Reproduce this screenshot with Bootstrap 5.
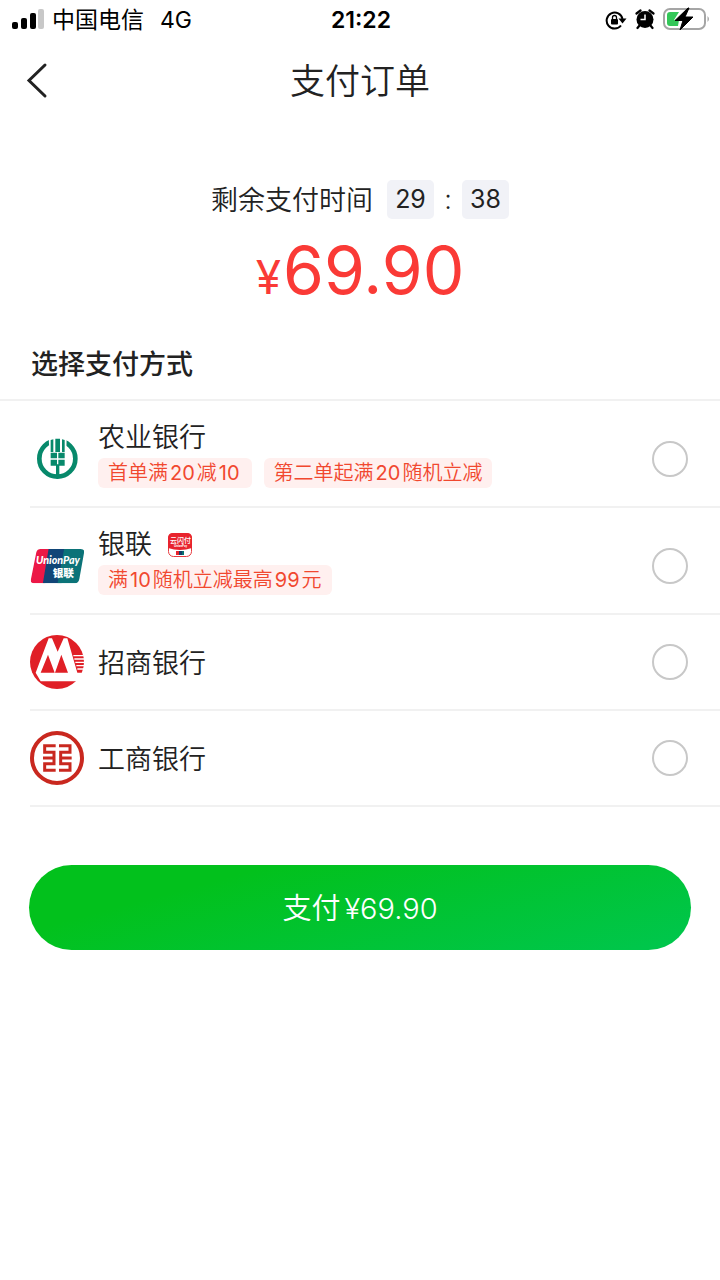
<!DOCTYPE html>
<html lang="zh-CN">
<head>
<meta charset="utf-8">
<meta name="viewport" content="width=device-width, initial-scale=1">
<title>支付订单</title>
<link href="https://cdn.jsdelivr.net/npm/bootstrap@5.3.0/dist/css/bootstrap.min.css" rel="stylesheet">
<style>
body { font-family: Inter, "Noto Sans CJK SC", sans-serif; font-size: 27px; line-height: 36px; color: #222; background: #fff; }
svg { display: block; flex: none; }
.status-bar { height: 40px; padding: 0 10px 0 12px; font-size: 23px; line-height: 40px; color: #000; }
.status-bar > div { flex: 1 1 0; }
.status-bar > .status-time { flex: none; font-weight: 600; }
.title-bar { height: 82px; display: grid; grid-template-columns: 72px 1fr 72px; }
.title-bar h1 { font-size: 35px; line-height: 48px; font-weight: 350; }
.back-btn { width: 72px; height: 80px; border-radius: 0; }
.countdown { padding-top: 58px; font-weight: 350; }
.countdown-label { padding: 2px 14px 0 0; }
.countdown-colon { width: 28px; }
.time-box { min-width: 47px; padding: 0 8px; line-height: 39px; font-size: 25px; border-radius: 5px; background: #f1f2f7; font-weight: 400; }
.price { color: #fa3a36; font-size: 66px; line-height: 80px; margin-top: 11px; }
.price small { font-size: 46px; margin-right: 2px; }
.section-title { font-size: 27px; line-height: 36px; font-weight: 500; padding: 30px 31px 16px; border-bottom: 2px solid #f1f1f1; }
.pay-list { padding-left: 30px; }
.pay-item { min-height: 96px; padding: 0 32px 0 0; gap: 14px; border-bottom: 2px solid #f1f1f1; cursor: pointer; }
.pay-item.with-offers { min-height: 107px; padding-top: 10px; }
.with-offers .pay-info { margin-bottom: 10px; }
.pay-name { font-weight: 350; padding-top: 3px; }
.with-offers .pay-name { padding: 1px 0 2px; }
.offer { font-size: 20px; line-height: 30px; padding: 0 10px; border-radius: 6px; color: #f1482f; background: #fff0ef; font-weight: 350; }
.offer span { margin: 0 2px; font-weight: 400; }
.pay-item .form-check-input { width: 36px; height: 36px; border: 2px solid #c8c8c8; margin: 0; flex: none; }
.pay-btn { height: 85px; border-radius: 43px; border: 0; font-size: 29px; font-weight: 350; color: #fff; background: linear-gradient(165deg, #02c11c 25%, #00c64b 95%); padding: 6px 0 4px; }
.pay-btn:hover { color: #fff; }
.pay-area { padding: 58px 29px; }
</style>
</head>
<body>
<header>
  <div class="status-bar d-flex align-items-center">
    <div class="d-flex align-items-center">
      <svg width="32" height="22" viewBox="0 0 32 22" aria-hidden="true"><rect x="0" y="13" width="6" height="7" rx="2"/><rect x="9" y="9" width="6" height="11" rx="2"/><rect x="18" y="4" width="6" height="16" rx="2"/><rect x="26" y="0" width="6" height="20" rx="2" fill="#c8c8c8"/></svg>
      <span class="ms-2">中国电信</span><span class="ms-3">4G</span>
    </div>
    <div class="status-time">21:22</div>
    <div class="d-flex align-items-center justify-content-end gap-2">
      <svg width="22" height="20" viewBox="0 0 22 20" aria-hidden="true"><path d="M16 15.500A8 8 0 1 1 17.500 9" fill="none" stroke="#000" stroke-width="2"/><path d="M13.500 8.500h8l-4 5z"/><rect x="6" y="9" width="7" height="5.500" rx="1"/><path d="M7.500 9V7.500a2 2 0 0 1 4 0V9" fill="none" stroke="#000" stroke-width="1.300"/></svg>
      <svg width="20" height="22" viewBox="0 0 20 22" aria-hidden="true"><circle cx="10" cy="10.500" r="8.500"/><path d="M1.500 4.500l4-3M18.500 4.500l-4-3M4.500 16.500L2.500 19M15.500 16.500l2 2.500" stroke="#000" stroke-width="2.200" stroke-linecap="round"/><path d="M10 5.500v5H5.500" fill="none" stroke="#fff" stroke-width="1.500"/></svg>
      <svg width="47" height="26" viewBox="0 0 47 26" aria-hidden="true"><rect x="1" y="2" width="41" height="20" rx="6" fill="none" stroke="#a5a5a5" stroke-width="2"/><path d="M44.500 9q3 3 0 6z" fill="#a5a5a5"/><path d="M7 5h9l-5 8h5l-1 6H7q-3 0-3-3V8q0-3 3-3z" fill="#34c759"/><path d="M25 1L12 13.500h8L17 23l13-13h-8l4-9z" stroke="#000" stroke-width="1"/></svg>
    </div>
  </div>
  <nav class="title-bar align-items-center">
    <button type="button" class="btn back-btn p-0" aria-label="返回"><svg class="ms-4" width="24" height="38" viewBox="0 0 24 38" aria-hidden="true"><path d="M20 3L4 18.500l16 15.500" fill="none" stroke="#222" stroke-width="3" stroke-linecap="round"/></svg></button>
    <h1 class="text-center m-0">支付订单</h1>
  </nav>
</header>
<main>
  <div class="countdown d-flex align-items-center justify-content-center">
    <span class="countdown-label">剩余支付时间</span><span class="time-box text-center">29</span><span class="countdown-colon text-center">:</span><span class="time-box text-center">38</span>
  </div>
  <div class="price text-center"><small>¥</small>69.90</div>
  <h2 class="section-title m-0">选择支付方式</h2>
  <div class="pay-list">
    <label class="pay-item with-offers d-flex align-items-center">
      <svg width="54" height="54" viewBox="0 3 162 162" aria-hidden="true"><circle cx="82" cy="83" r="54" fill="none" stroke="#07896b" stroke-width="14"/><path d="M56 18h54l-1 42H58z" fill="#fff"/><g fill="#07896b"><path d="M76 23h14v40H76zM62 27l8-2v38h-8zM96 25l8 2v36h-8zM62 65h19v17H62zM85 65h19v17H85zM62 86h19v18H62zM85 86h19v18H85zM78 100h10v42H78z"/></g></svg>
      <span class="pay-info flex-grow-1">
        <span class="pay-name d-block">农业银行</span>
        <span class="d-flex flex-wrap gap-2"><span class="offer">首单满<span>20</span>减<span>10</span></span><span class="offer ms-1">第二单起满<span>20</span>随机立减</span></span>
      </span>
      <input class="form-check-input" type="radio" name="pay">
    </label>
    <label class="pay-item with-offers d-flex align-items-center">
      <svg width="54" height="54" viewBox="30 58 162 162" aria-hidden="true"><defs><clipPath id="card-shape"><path d="M62 88H182q13 0 10 12L178 178q-3 13-13 13H42q-12 0-9-13L49 98q3-10 13-10z"/></clipPath></defs><g clip-path="url(#card-shape)"><path fill="#ec1846" d="M30 80h70L75 195H30z"/><path fill="#114577" d="M87 80h60l-23 115H68z"/><path fill="#0b7378" d="M134 80h60v115h-82z"/></g><text fill="#fff" font-weight="900"><tspan x="48" y="134" font-family="Lato" font-size="32" font-style="italic">UnionPay</tspan><tspan x="98" y="171" font-family="Noto Sans CJK SC" font-size="32">银联</tspan></text></svg>
      <span class="pay-info flex-grow-1">
        <span class="pay-name d-flex align-items-center">银联<svg class="ms-3" width="24" height="24" viewBox="0 0 24 24" aria-hidden="true"><rect x=".5" y=".5" width="23" height="23" rx="5" fill="#fff" stroke="#e63a3f"/><path d="M0 15V5q0-5 5-5h14q5 0 5 5v10q-12 4-24 0z" fill="#e8232d"/><text fill="#fff"><tspan x="2" y="10" font-family="Noto Sans CJK SC" font-size="7" font-weight="500">云闪付</tspan><tspan x="6" y="14" font-family="Lato" font-size="3" font-weight="900">UnionPay</tspan></text><path fill="#e8232d" d="M8 18h3v4H8z"/><path fill="#163b68" d="M11 18h3v4h-3z"/><path fill="#08716f" d="M14 18h2v4h-2z"/></svg></span>
        <span class="d-flex"><span class="offer">满<span>10</span>随机立减最高<span>99</span>元</span></span>
      </span>
      <input class="form-check-input" type="radio" name="pay">
    </label>
    <label class="pay-item d-flex align-items-center">
      <svg width="54" height="54" viewBox="30 45 162 162" aria-hidden="true"><circle cx="111" cy="126" r="81" fill="#e01f26"/><path d="M86 55h10l17 40 18-40h11l30 103h18l-13 26H62l-15-26z" fill="#fff"/><path d="M84 104l20 54H62zM124 104l20 54h-39z" fill="#e01f26"/><path d="M160 107h31M163 117h29M166 127h26M169 137h23M172 147h19" stroke="#fff" stroke-width="4"/></svg>
      <span class="pay-name flex-grow-1">招商银行</span>
      <input class="form-check-input" type="radio" name="pay">
    </label>
    <label class="pay-item d-flex align-items-center">
      <svg width="54" height="54" viewBox="30 33 162 162" aria-hidden="true"><circle cx="111" cy="114" r="75" fill="none" stroke="#c9281f" stroke-width="12"/><path d="M107 77H74v20h28v34H74v20h33M102 114H69M117 77h33v20h-28v34h28v20h-33M122 114h33" fill="none" stroke="#c9281f" stroke-width="9"/></svg>
      <span class="pay-name flex-grow-1">工商银行</span>
      <input class="form-check-input" type="radio" name="pay">
    </label>
  </div>
  <div class="pay-area"><button type="button" class="btn pay-btn w-100">支付<span class="ms-1">¥69.90</span></button></div>
</main>
<script src="https://cdn.jsdelivr.net/npm/bootstrap@5.3.0/dist/js/bootstrap.bundle.min.js"></script>
</body>
</html>
